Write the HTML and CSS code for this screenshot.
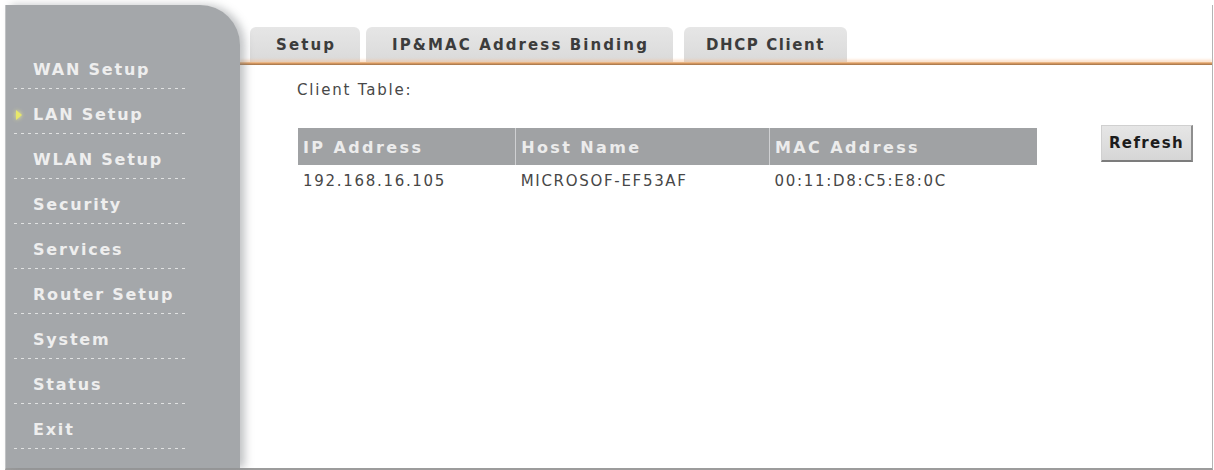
FILE: index.html
```html
<!DOCTYPE html>
<html lang="en">
<head>
    <meta charset="UTF-8">
    <meta name="viewport" content="width=device-width, initial-scale=1.0">
    <title>LAN Setup - DHCP Client</title>
    <link rel="stylesheet" href="styles.css">
</head>
<body>
    <div class="frame">
        <!-- left navigation -->
        <nav class="sidebar">
            <ul class="menu">
                <li><a href="#">WAN Setup</a></li>
                <li class="current"><a href="#">LAN Setup</a></li>
                <li><a href="#">WLAN Setup</a></li>
                <li><a href="#">Security</a></li>
                <li><a href="#">Services</a></li>
                <li><a href="#">Router Setup</a></li>
                <li><a href="#">System</a></li>
                <li><a href="#">Status</a></li>
                <li><a href="#">Exit</a></li>
            </ul>
        </nav>

        <main class="main">
            <div class="tabs">
                <a class="tab" href="#">Setup</a>
                <a class="tab" href="#">IP&amp;MAC Address Binding</a>
                <a class="tab" href="#">DHCP Client</a>
            </div>
            <div class="tab-line"></div>

            <div class="content">
                <p class="caption">Client Table:</p>
                <div class="client-row">
                    <table class="clients">
                        <thead>
                            <tr>
                                <th class="col-ip">IP Address</th>
                                <th class="col-host">Host Name</th>
                                <th class="col-mac">MAC Address</th>
                            </tr>
                        </thead>
                        <tbody>
                            <tr>
                                <td>192.168.16.105</td>
                                <td>MICROSOF-EF53AF</td>
                                <td>00:11:D8:C5:E8:0C</td>
                            </tr>
                        </tbody>
                    </table>
                    <button class="refresh" type="button">Refresh</button>
                </div>
            </div>
        </main>
    </div>
</body>
</html>
```

FILE: styles.css
```css
/* Page frame */
body {
    margin: 0;
    background: #ffffff;
    font-family: "DejaVu Sans", Verdana, sans-serif;
    color: #4a4a4a;
}

.frame {
    display: flex;
    height: 463px;
    margin: 5px 1px 0 5px;
    border-left: 1px solid #c4c6c8;
    border-right: 1px solid #b4b4b4;
    border-bottom: 2px solid #9c9c9c;
}

/* Sidebar menu */
.sidebar {
    width: 234px;
    flex-shrink: 0;
    background: #a4a7aa;
    border-top-right-radius: 40px;
    box-shadow: 5px 0 8px rgba(120, 124, 128, 0.45);
    position: relative;
    z-index: 1;
}

.menu {
    list-style: none;
    margin: 0;
    padding: 40px 0 0 0;
}

.menu li {
    position: relative;
    width: 173px;
    margin-left: 8px;
    padding: 16px 0 10px 19px;
    box-sizing: border-box;
    height: 45px;
    /* dotted separator */
    background-image: linear-gradient(to right, rgba(235, 235, 235, 0.85) 0 3px, transparent 3px);
    background-size: 7px 1px;
    background-repeat: repeat-x;
    background-position: left bottom 1px;
}

.menu a {
    display: block;
    font-size: 16px;
    line-height: 18px;
    font-weight: bold;
    letter-spacing: 1.8px;
    color: #eeeeee;
    text-decoration: none;
}

.menu li.current::before {
    content: "";
    position: absolute;
    left: 2px;
    top: 20px;
    border-left: 6px solid #e8e86a;
    border-top: 5px solid transparent;
    border-bottom: 5px solid transparent;
    filter: drop-shadow(0 0 2px #f4f48a);
}

/* Main area */
.main {
    flex: 1;
    display: flex;
    flex-direction: column;
}

.tabs {
    display: flex;
    gap: 5px;
    padding: 22px 0 0 10px;
}

.tab {
    height: 35px;
    line-height: 37px;
    padding: 0 24px 0 26px;
    background: linear-gradient(#e6e6e6, #dadada);
    border-radius: 6px 6px 0 0;
    font-size: 15px;
    font-weight: bold;
    letter-spacing: 2.1px;
    color: #3c3c3c;
    text-decoration: none;
    white-space: nowrap;
}

.tab + .tab {
    margin-left: 1px;
}

.tab:last-child {
    margin-left: 6px;
    padding: 0 22px 0 22px;
    letter-spacing: 1.6px;
}

.tab-line {
    height: 3px;
    background: linear-gradient(#f6c89a, #c98a52 60%, #9c7550);
    box-shadow: 0 -2px 3px rgba(248, 190, 140, 0.55);
}

/* Client table */
.content {
    padding: 16px 19px 0 57px;
}

.caption {
    margin: 0;
    font-size: 15px;
    line-height: 18px;
    letter-spacing: 1.8px;
    color: #484848;
}

.client-row {
    display: flex;
    justify-content: space-between;
    align-items: flex-start;
    margin-top: 29px;
}

.clients {
    width: 739px;
    border-collapse: collapse;
    margin-left: 1px;
}

.clients th {
    height: 35px;
    padding: 2px 0 0 5px;
    background: #a0a2a4;
    color: #ececec;
    font-size: 16px;
    font-weight: bold;
    letter-spacing: 2.4px;
    text-align: left;
    border-left: 1px solid #cfd0d2;
}

.clients th:first-child {
    border-left: none;
}

.col-ip { width: 216px; }
.col-host { width: 256px; }
.col-mac { width: 267px; }

.clients td {
    padding: 8px 0 0 5px;
    font-size: 15px;
    line-height: 17px;
    letter-spacing: 1.7px;
    color: #474747;
}

.refresh {
    margin-top: -3px;
    width: 92px;
    height: 37px;
    padding: 0;
    background: linear-gradient(#e6e6e6, #d6d6d6);
    border: 1px solid #d0d0d0;
    border-right: 2px solid #8e8e8e;
    border-bottom: 2px solid #7c7c7c;
    font-family: "DejaVu Sans", Verdana, sans-serif;
    font-size: 15px;
    font-weight: bold;
    letter-spacing: 1.4px;
    color: #1c1c1c;
}
```
